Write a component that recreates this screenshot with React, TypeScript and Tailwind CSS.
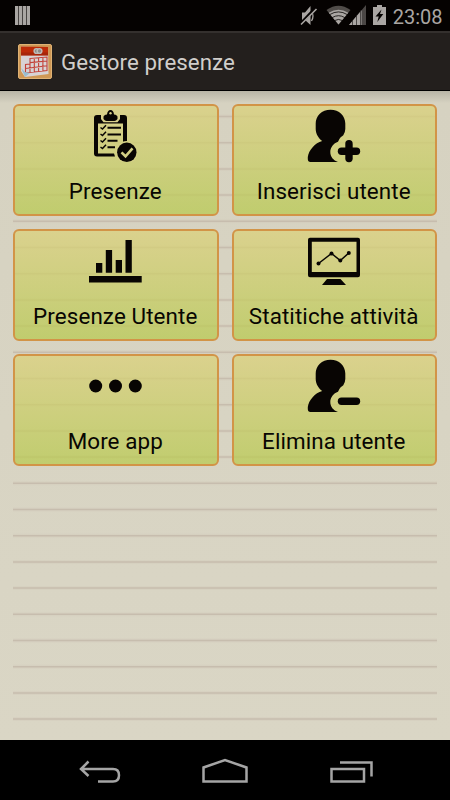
import type { ReactNode } from 'react';

const RULES = Array.from({ length: 24 }, (_, i) => 24.5 + i * 26.2);

export default function App() {
  return (
    <div className="flex h-[800px] w-[450px] flex-col overflow-hidden bg-black font-['Roboto',sans-serif]">
      <StatusBar />
      <header className="flex h-[59px] shrink-0 items-center border-t-2 border-[#34302e] bg-[#231f1d] pl-[18px]">
        <CalendarLogo />
        <h1 className="ml-[9px] pt-px text-[22.3px] leading-none tracking-[0.05px] text-[#d1cecb]">Gestore presenze</h1>
      </header>

      <main className="relative min-h-0 flex-1 border-t border-black bg-[#d9d5c3]">
        <RuledPaper />
        <div className="relative grid grid-cols-2 gap-[13px] px-[13px] pt-[13px]">
          <Tile label="Presenze"><ClipboardIcon /></Tile>
          <Tile label="Inserisci utente"><UserIcon plus /></Tile>
          <Tile label="Presenze Utente"><BarsIcon /></Tile>
          <Tile label="Statitiche attività"><MonitorIcon /></Tile>
          <Tile label="More app"><DotsIcon /></Tile>
          <Tile label="Elimina utente"><UserIcon /></Tile>
        </div>
      </main>

      <NavBar />
    </div>
  );
}

function Tile({ label, children }: { label: string; children: ReactNode }) {
  return (
    <button className="flex h-[112px] flex-col items-center rounded-[6px] border-2 border-[#d29447] bg-linear-to-b from-[#dcd17c]/75 to-[#b8ca51]/75 bg-origin-border pt-[2px] pr-px">
      {children}
      <span className="mt-[15px] text-[22.4px] leading-[28px] tracking-[0.1px] whitespace-nowrap text-[#080602]">{label}</span>
    </button>
  );
}

function RuledPaper() {
  return (
    <div className="absolute inset-0 bg-linear-to-b from-[#b8b5a6] via-[#d6d2c1] via-[12px] to-[#dad6c5]">
      <svg className="block" width="450" height="649" viewBox="0 0 450 649">
        {RULES.map((y) => (
          <g key={y}>
            <path d={`M13 ${y + 1}H437`} stroke="#d2c8b8" strokeWidth="4" opacity=".3" />
            <path d={`M13 ${y + 1}H437`} stroke="#c7bdae" strokeWidth="1.5" />
          </g>
        ))}
      </svg>
    </div>
  );
}

function StatusBar() {
  return (
    <div className="flex h-[31px] shrink-0 items-start bg-[#050201] pl-[15px] text-[#aaa6a3]">
      <svg className="mt-[6px]" width="16" height="19" fill="currentColor">
        <path d="M0 0h3v19H0zM4 0h3v19H4zM8 0h3v19H8zM12 0h3v19h-3z" />
        <path d="M3 0h1v19H3zM7 0h1v19H7zM11 0h1v19h-1z" opacity=".4" />
      </svg>
      <svg className="ml-auto" width="88" height="31" viewBox="298 0 88 31" fill="currentColor">
        <path d="M301 12.5h3L309.5 6v19l-5.5-5h-3z" />
        <path d="M310.5 11q3 5 0 10" fill="none" stroke="currentColor" strokeWidth="1.3" />
        <path d="M299 24.5 314.5 8" stroke="#050201" strokeWidth="3" />
        <path d="M300 24.5 315.5 9" stroke="currentColor" strokeWidth="1.6" />
        <path d="M337.5 24.5 325.5 10q12-8.500 24 0z" fill="#504c49" />
        <path d="M337.5 24.5 327.7 12.8q9.800-6 19.600 0z" />
        <path d="M328.7 14.6q8.800-5.400 17.600 0M331.200 17.600q6.300-3.800 12.600 0M333.800 20.500q3.700-2.100 7.400 0" fill="none" stroke="#050201" strokeWidth=".8" />
        <path d="M365 5v20h-17z" fill="#4b4745" />
        <path d="M360.5 10.3V25h-12.5z" />
        <path d="M351.5 20v5M355.5 15v10M359.5 10v15" stroke="#242120" strokeWidth=".7" />
        <path d="M376 5h5v2h4v18h-13V7h4z" />
        <path d="m380.500 9.500-6 7h3.200l-1.400 5.500 6-8H379z" fill="#050201" />
      </svg>
      <span className="mt-[6px] mr-[7.5px] ml-[6px] text-[20px] leading-[22px]">23:08</span>
    </div>
  );
}

function CalendarLogo() {
  return (
    <svg width="34" height="35" viewBox="0 0 34 35">
      <rect x=".5" y=".5" width="33" height="34" rx="1.5" fill="#cf9855" stroke="#dfb274" />
      <path d="M3 2.5 30 3.5 30.5 30 7 33 3 27z" fill="#d8d3d4" />
      <path d="M3 2.5 30 3v8.500H3z" fill="#bd2b08" />
      <path d="M3 8.500h27v3H3z" fill="#92210c" opacity=".5" />
      <path
        d="M12 14.500 29 13v13.500L7.500 29v-8.500l4.500-.500zM12 18.600 29 17M7.500 24.500 29 21.800M12 14.500v14M16.300 14.200v14M20.600 13.800v13.800M24.900 13.400v14"
        fill="none"
        stroke="#c34239"
        strokeWidth="1.1"
      />
      <path d="m3 24 4 9 5-4-5-1z" fill="#9abed0" />
      <circle cx="18.5" cy="7" r="2.4" fill="#8c8986" stroke="#bdbab7" strokeWidth="1.4" />
      <circle cx="21.5" cy="7" r="2.4" fill="#8c8986" stroke="#bdbab7" strokeWidth="1.4" />
    </svg>
  );
}

function ClipboardIcon() {
  return (
    <svg className="shrink-0" width="54" height="54" viewBox="-1 -1 54 54" fill="#080503">
      <path fillRule="evenodd" d="M8 6h27a3 3 0 0 1 3 3v23l-4 2V14.500H9V44.500h16l1 3H8a3 3 0 0 1-3-3V9a3 3 0 0 1 3-3z" />
      <path d="M12 5h19v5l-2.500 3.300h-14L12 10z" fill="#d9d08b" />
      <path d="M14.500 10V8q0-2 3.500-2.500Q18.500 1 21.500 1T25 5.500q3.500.5 3.500 2.500v2q-1.500 2-3 2h-8q-1.500 0-3-2z" />
      <circle cx="21.5" cy="4.3" r="1.2" fill="#d9d08b" />
      <path d="M18.500 18.800H32M18.500 25.400H32M18.500 31.800H28.500M18.500 38.300H26" stroke="#080503" strokeWidth="2" />
      <path
        d="m11.500 18.500 2 1.500 3.500-3.700M11.500 25l2 1.500 3.500-3.700M11.500 31.500l2 1.500 3.500-3.700M11.500 38l2 1.500 3.500-3.700"
        fill="none"
        stroke="#080503"
        strokeWidth="1.5"
      />
      <circle cx="37.8" cy="43.3" r="11.2" fill="#d3cf85" />
      <circle cx="37.8" cy="43.3" r="9.7" />
      <path d="m32.500 43.400 4 3.900 7-8" fill="none" stroke="#d3cf85" strokeWidth="2.6" />
    </svg>
  );
}

function UserIcon({ plus = false }: { plus?: boolean }) {
  return (
    <svg className="shrink-0 overflow-visible" width="54" height="54" viewBox="0 -1 54 54" fill="#080503">
      <path d="M23.500.8C32.200.8 38.300 7 38.300 14.500V20q0 3-2 6.200c-1.800 1.400-3 2.200-4 4.100l-1.300 2.400c-4.500 1.600-7.700 5.600-7.700 10.300 0 4.500 3 8.500 7.700 10H3.500Q.8 53 .8 50V48C1.800 41 8 34 15.200 32 11.500 29.300 8.700 25 8.700 20v-5.500C8.700 7 14.800.8 23.500.8z" />
      <path d="M34.500 42.300H49.500" stroke="#080503" strokeWidth="7.4" strokeLinecap="round" />
      {plus && <path d="M42 34.700v14.800" stroke="#080503" strokeWidth="7.4" strokeLinecap="round" />}
    </svg>
  );
}

function BarsIcon() {
  return (
    <svg className="shrink-0" width="54" height="54" viewBox="-.5 0 54 54" fill="#080503">
      <path d="M.5 43h52.700v6.500H.5zM7.500 30h6.300v9.800H7.500zM17.300 17h6.300v22.800h-6.300zM27.200 27h6.300v12.800h-6.300zM37 7h6.300v32.800H37z" />
    </svg>
  );
}

function MonitorIcon() {
  return (
    <svg className="shrink-0" width="54" height="54" viewBox="0 0 54 54" fill="#080503">
      <path
        fillRule="evenodd"
        d="M3 4.800h48a2 2 0 0 1 2 2v35.500a2 2 0 0 1-2 2H3a2 2 0 0 1-2-2V6.800a2 2 0 0 1 2-2zM4.800 8.800v30.200h44.700v-30.200zM20 46h13.500l5.500 6H15z"
      />
      <path d="m11.500 30.500 13-10 8.800 7L41.800 20" fill="none" stroke="#080503" strokeWidth="1.5" />
      <circle cx="11.5" cy="30.5" r="2" />
      <circle cx="24.5" cy="20.5" r="2" />
      <circle cx="33.3" cy="27.5" r="2" />
      <circle cx="41.8" cy="20" r="2" />
    </svg>
  );
}

function DotsIcon() {
  return (
    <svg className="shrink-0" width="54" height="54" viewBox="-.5 0 54 54" fill="#080503">
      <circle cx="7.2" cy="28" r="6.5" />
      <circle cx="27" cy="28" r="6.5" />
      <circle cx="46.8" cy="28" r="6.5" />
    </svg>
  );
}

function NavBar() {
  return (
    <nav className="flex h-[60px] shrink-0 justify-around bg-black px-[37px]">
      <svg width="125" height="60" viewBox="37 740 125 60" fill="none" stroke="#a5a5a5" strokeWidth="2.5">
        <path d="M81 769h32q6 0 6 6.200t-6 6.200H98M88.500 761.500 81 769l7.500 7" />
      </svg>
      <svg width="125" height="60" viewBox="162 740 125 60" fill="none" stroke="#a5a5a5" strokeWidth="2.5">
        <path d="M203.500 781.500v-14l21.500-7.500 21.500 7.500v14z" />
      </svg>
      <svg width="125" height="60" viewBox="288 740 125 60" fill="none" stroke="#a5a5a5" strokeWidth="2.5">
        <path d="M331.500 769h32.500v12.500h-32.500zM340 762.500h31.500V776.500" />
      </svg>
    </nav>
  );
}
